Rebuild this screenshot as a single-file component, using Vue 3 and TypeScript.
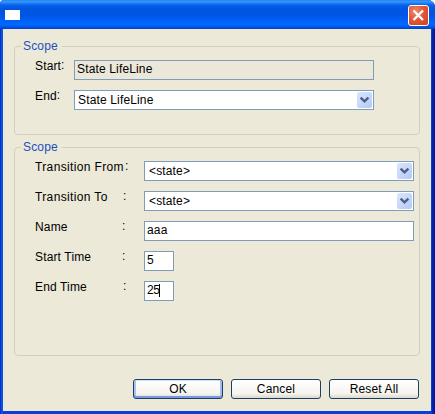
<script setup lang="ts">
import { ref } from 'vue'

interface Row {
  label: string
  colon: string
  value: string
  kind: 'combo' | 'text' | 'small'
  focused?: boolean
}

const participants = ref([
  { label: 'Start', value: 'State LifeLine', combo: false },
  { label: 'End', value: 'State LifeLine', combo: true },
])

const rows = ref<Row[]>([
  { label: 'Transition From', colon: 'wide', value: '<state>', kind: 'combo' },
  { label: 'Transition To', colon: 'mid', value: '<state>', kind: 'combo' },
  { label: 'Name', colon: 'near', value: 'aaa', kind: 'text' },
  { label: 'Start Time', colon: 'near', value: '5', kind: 'small' },
  { label: 'End Time', colon: 'mid', value: '25', kind: 'small', focused: true },
])

const buttons = ['OK', 'Cancel', 'Reset All']
</script>

<template>
  <div class="window">
    <header class="titlebar">
      <span class="app-icon"></span>
      <button class="close" aria-label="Close">
        <svg width="21" height="21" viewBox="0 0 21 21">
          <path d="M5.5 5.5 L15 15 M15 5.5 L5.5 15" stroke="#fff" stroke-width="2.3" fill="none" />
        </svg>
      </button>
    </header>
    <main class="body">
      <section class="group first">
        <h2 class="legend">Scope</h2>
        <div v-for="p in participants" :key="p.label" class="row">
          <span class="label"><span>{{ p.label }}</span><span class="dots">:</span></span>
          <div class="field" :class="{ disabled: !p.combo, combo: p.combo }">
            <span class="value">{{ p.value }}</span>
            <span v-if="p.combo" class="arrow">
              <svg width="15" height="16" viewBox="0 0 15 16"><path d="M3.6 5.7 L7.5 9.4 L11.4 5.7" /></svg>
            </span>
          </div>
        </div>
      </section>
      <section class="group second">
        <h2 class="legend">Scope</h2>
        <div v-for="r in rows" :key="r.label" class="row">
          <span class="label" :class="{ spaced: r.kind === 'combo' }"><span>{{ r.label }}</span><span class="colon" :class="r.colon">:</span></span>
          <div class="field" :class="r.kind">
            <span class="value">{{ r.value }}</span><i v-if="r.focused" class="caret"></i>
            <span v-if="r.kind === 'combo'" class="arrow">
              <svg width="15" height="16" viewBox="0 0 15 16"><path d="M3.6 5.7 L7.5 9.4 L11.4 5.7" /></svg>
            </span>
          </div>
        </div>
      </section>
      <footer class="actions">
        <button v-for="b in buttons" :key="b" class="btn" :class="{ primary: b === 'OK' }">{{ b }}</button>
      </footer>
    </main>
  </div>
</template>

<style>
body {
  margin: 0;
  background: #fff;
}
</style>

<style scoped>
* {
  box-sizing: border-box;
}
.window {
  width: 435px;
  height: 414px;
  padding: 0 4px 3px 3px;
  background: linear-gradient(90deg, #0733c8 0, #0733c8 1px, #0c50e4 1px, #0c50e4 3px, #0c3ed0 3px, #0c3ed0 432px, #0526b8 432px, #001a9c 434px);
  border-radius: 4px 7px 0 0;
  overflow: hidden;
  font: 12px/14px "Liberation Sans", Arial, sans-serif;
  letter-spacing: 0.15px;
  color: #000;
}
.titlebar {
  height: 29px;
  margin: 0 -4px 0 -3px;
  padding: 5px 6px 0 5px;
  display: flex;
  justify-content: space-between;
  background: linear-gradient(180deg, #1677ee 0, #3c9bff 1px, #2484f8 3px, #0662ea 5px, #0055e2 9px, #0055e5 16px, #0062fb 21px, #0068ff 25px, #0054e4 27px, #003fc4 29px);
}
.app-icon {
  width: 15px;
  height: 10px;
  margin-top: 5px;
  background: #fff;
}
.close {
  width: 21px;
  height: 21px;
  padding: 0;
  border: 1px solid #fff;
  border-radius: 3px;
  background: radial-gradient(circle at 35% 30%, #ee8a6c 0, #e2583a 45%, #cf3e16 100%);
}
.close svg {
  display: block;
  margin: -1px;
}
.body {
  height: 382px;
  padding: 17px 11px 0;
  background: #ece9d8;
  border-bottom: 1px solid #e8ecf2;
}
.group {
  width: 406px;
  border: 1px solid #d0d0bf;
  border-radius: 4px;
  padding-left: 20px;
}
.first {
  height: 89px;
}
.second {
  height: 209px;
  margin-top: 12px;
}
.legend {
  width: 41px;
  height: 14px;
  margin: -8px 0 7px -14px;
  padding-left: 2px;
  background: #ece9d8;
  color: #2050c0;
  font-size: 12px;
  font-weight: 400;
  line-height: 14px;
}
.row {
  display: flex;
  height: 20px;
  margin-bottom: 10px;
}
.label {
  flex: none;
  display: flex;
  justify-content: space-between;
  width: 39px;
  line-height: 12px;
  white-space: nowrap;
}
.first .label {
  justify-content: flex-start;
}
.second .label {
  width: 109px;
}
.label.spaced {
  letter-spacing: 0.36px;
}
.dots,
.colon {
  line-height: 10px;
}
.colon {
  width: 20px;
}
.colon.wide {
  width: 19px;
}
.colon.near {
  width: 22px;
}
.colon.mid {
  width: 21px;
}
.field {
  display: flex;
  width: 300px;
  height: 20px;
  padding: 1px 1px 1px 2px;
  border: 1px solid #7f9db9;
  background: #fff;
  line-height: 15px;
}
.second .field {
  width: 270px;
}
.field.disabled {
  background: #ebe8d9;
}
.field.combo {
  padding-left: 3px;
}
.second .field.combo {
  padding-left: 4px;
}
.field.combo .value {
  padding-top: 1px;
}
.second .field.small {
  width: 30px;
  line-height: 14px;
  letter-spacing: -0.5px;
}
.value {
  white-space: nowrap;
}
.caret {
  width: 1px;
  height: 13px;
  margin-top: 1px;
  background: #000;
}
.arrow {
  width: 15px;
  height: 16px;
  margin-left: auto;
  border-radius: 2px;
  background: linear-gradient(135deg, #dce7fe, #b4c8f6);
}
.arrow svg {
  display: block;
}
.arrow path {
  fill: none;
  stroke: #4d6185;
  stroke-width: 2.4;
}
.actions {
  display: flex;
  gap: 8px;
  margin: 23px 0 0 119px;
}
.btn {
  width: 90px;
  height: 20px;
  padding: 0 0 1px;
  border: 1px solid #1c3f66;
  border-radius: 3px;
  background: linear-gradient(180deg, #fff, #f5f4ef 75%, #dcd8cc);
  font: inherit;
  letter-spacing: inherit;
  color: #000;
}
.btn.primary {
  box-shadow: inset 0 1px #cee0fc, inset 0 -2px #7a98e4, inset 2px 0 #a9c3f4, inset -2px 0 #a0bbf0;
}
</style>
